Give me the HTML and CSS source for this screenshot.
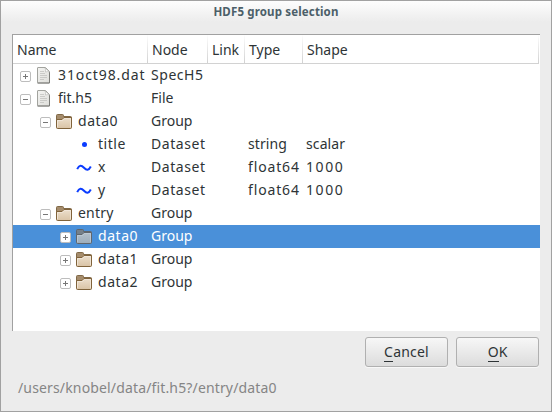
FILE: index.html
```html
<!DOCTYPE html>
<html lang="en">
<head>
<meta charset="utf-8">
<title>HDF5 group selection</title>
<link rel="stylesheet" href="styles.css">
</head>
<body>
<svg class="defs" width="0" height="0">
  <defs>
    <linearGradient id="tan" x1="0" y1="0" x2="0" y2="1"><stop offset="0" stop-color="#ecdfcd"/><stop offset="1" stop-color="#d9c3a5"/></linearGradient>
    <linearGradient id="steel" x1="0" y1="0" x2="0" y2="1"><stop offset="0" stop-color="#b4c0ca"/><stop offset="1" stop-color="#9dadba"/></linearGradient>
    <linearGradient id="paper" x1="0" y1="0" x2="1" y2="1"><stop offset="0" stop-color="#f4f4f2"/><stop offset="1" stop-color="#dededa"/></linearGradient>
    <symbol id="file" viewBox="0 0 16 17">
      <path d="M2 .5h7.500l4 4v11q0 .5-.5.5H2q-.5 0-.5-.5V1q0-.5.5-.5z" fill="url(#paper)" stroke="#a2a39e"/>
      <path d="M1.500 16h12V5" fill="none" stroke="#7c7d79"/>
      <path d="M9 1q1 1.500.5 4 2-.8 4 0z" fill="#fff" stroke="#b4b4b0" stroke-width=".6"/>
      <path d="M4 4.500h4M4 6.500h5M4 8.500h7M4 10.500h7M4 12.500h4" stroke="#c2c2bf" stroke-width=".8"/>
    </symbol>
    <symbol id="folder" viewBox="0 0 16 15">
      <path class="back" d="M.5 13V1.500q0-1 1-1h5q1 0 1 1v1h7q1 0 1 1V13z"/>
      <path class="front" d="M.5 5.500h5.500l2-2h7.500v10q0 1-1 1h-13q-1 0-1-1z"/>
      <path class="shine" d="M1.500 13V6.500h5l2-2h6V13"/>
    </symbol>
    <symbol id="wave" viewBox="0 0 16 8">
      <path d="M1.200 5.200C3.200.8 5.400 1.100 8 3.800S12.600 6.700 14.800 2.500" fill="none" stroke="#0b3cff" stroke-width="2"/>
    </symbol>
  </defs>
</svg>
<div class="window">
  <header class="titlebar">HDF5 group selection</header>
  <main class="tree">
    <div class="grid head">
      <span>Name</span><span>Node</span><span>Link</span><span>Type</span><span>Shape</span>
    </div>
    <div class="grid row">
      <div class="name"><i class="toggle plus"></i><svg class="file"><use href="#file"/></svg><span class="s9">31oct98.dat</span></div>
      <span class="s5">SpecH5</span>
    </div>
    <div class="grid row">
      <div class="name"><i class="toggle"></i><svg class="file"><use href="#file"/></svg><span>fit.h5</span></div>
      <span>File</span>
    </div>
    <div class="grid row">
      <div class="name l1"><i class="toggle"></i><svg class="folder"><use href="#folder"/></svg><span class="s5">data0</span></div>
      <span>Group</span>
    </div>
    <div class="grid row">
      <div class="name leaf"><i class="dot"></i><span class="s5">title</span></div>
      <span class="s5">Dataset</span><span></span><span class="s1">string</span><span class="s1">scalar</span>
    </div>
    <div class="grid row">
      <div class="name leaf"><svg class="wave"><use href="#wave"/></svg><span>x</span></div>
      <span class="s5">Dataset</span><span></span><span class="s8">float64</span><span class="s16">1000</span>
    </div>
    <div class="grid row">
      <div class="name leaf"><svg class="wave"><use href="#wave"/></svg><span>y</span></div>
      <span class="s5">Dataset</span><span></span><span class="s8">float64</span><span class="s16">1000</span>
    </div>
    <div class="grid row">
      <div class="name l1"><i class="toggle"></i><svg class="folder"><use href="#folder"/></svg><span class="s2">entry</span></div>
      <span>Group</span>
    </div>
    <div class="grid row selected">
      <div class="name l2"><i class="toggle plus"></i><svg class="folder"><use href="#folder"/></svg><span class="s5">data0</span></div>
      <span>Group</span>
    </div>
    <div class="grid row">
      <div class="name l2"><i class="toggle plus"></i><svg class="folder"><use href="#folder"/></svg><span class="s5">data1</span></div>
      <span>Group</span>
    </div>
    <div class="grid row">
      <div class="name l2"><i class="toggle plus"></i><svg class="folder"><use href="#folder"/></svg><span class="s5">data2</span></div>
      <span>Group</span>
    </div>
  </main>
  <div class="actions">
    <button class="s2"><span class="key">C</span>ancel</button>
    <button><span class="key">O</span>K</button>
  </div>
  <footer class="path">/users/knobel/data/fit.h5?/entry/data0</footer>
</div>
</body>
</html>
```

FILE: styles.css
```css
* { box-sizing: border-box; }
body { margin: 0; font: 14px/22px "Noto Sans", sans-serif; color: #2e3436; }
.defs { display: block; }
.window {
  width: 552px; height: 412px; padding: 0 11px; overflow: hidden;
  border: 1px solid #a1a1a1;
  background: linear-gradient(#fdfdfd, #ececec 21px, #ececec);
}
.titlebar { height: 33px; text-align: center; font-size: 11.5px; font-weight: 700; letter-spacing: .15px; color: #4c5f69; }
.tree {
  width: 528px; height: 297px; background: #fff;
  border-top: 1px solid #a1a1a1; border-left: 1px solid #a1a1a1;
}
.grid { display: grid; grid-template-columns: 135px 60px 37px 58px 236px; white-space: nowrap; }
.head { width: 526px; height: 29px; border-bottom: 1px solid #d2d2d2; }
.head span {
  padding: 4px 0 0 4px; border-right: 1px solid;
  border-image: linear-gradient(#fff, #d0d0d0) 1;
}
.row { height: 23px; }
.row > span { padding-left: 3px; }
.row > span:nth-child(5) { padding-left: 3px; }
.name { display: flex; align-items: center; padding-left: 7px; height: 23px; }
.name.l1 { padding-left: 27px; }
.name.l2 { padding-left: 47px; }
.name.leaf { padding-left: 63px; }
.name > span { height: 23px; }
.toggle {
  width: 11px; height: 11px; margin: 2px 5px 0 0; flex: none;
  border: 1px solid #bdbdbd; border-radius: 2px;
  background: linear-gradient(#777, #777) center / 5px 1px no-repeat, #fff;
}
.toggle.plus {
  background: linear-gradient(#777, #777) center / 5px 1px no-repeat,
    linear-gradient(#777, #777) center / 1px 5px no-repeat, #fff;
}
.file { width: 16px; height: 17px; margin: 0 6px 1px 0; flex: none; }
.folder { width: 16px; height: 15px; margin-right: 6px; flex: none; }
.back { fill: var(--back, #a58c6c); stroke: var(--edge, #806846); }
.front { fill: var(--front, url(#tan)); stroke: var(--edge, #80633b); }
.shine { fill: none; stroke: var(--shine, #f3e9dc); stroke-opacity: .8; }
.selected {
  --back: #75808a; --edge: #60666c; --front: url(#steel); --shine: #becbd6;
  width: 527px; background: #4a90d9; color: #fff;
}
.dot { width: 5px; height: 5px; margin: 0 11px 1px 6px; border-radius: 50%; background: #0b3cff; }
.wave { width: 16px; height: 8px; margin-right: 6px; flex: none; }
.s1 { letter-spacing: .1px; }
.s2 { letter-spacing: .2px; }
.s5 { letter-spacing: .55px; }
.s8 { letter-spacing: .85px; }
.s9 { letter-spacing: .9px; }
.s16 { letter-spacing: 1.6px; }
.actions { display: flex; justify-content: flex-end; gap: 8px; padding: 6px 1px 0 0; }
button {
  width: 83px; height: 30px; padding: 0; font: inherit; color: inherit;
  border: 1px solid #b0b0b0; border-radius: 3px;
  background: linear-gradient(#f7f7f7, #dcdcdc); box-shadow: 0 1px #f8f8f8;
}
button.s2 { letter-spacing: .2px; }
.key { display: inline-block; height: 20px; line-height: 20px; border-bottom: 1px solid #2e3436; }
.path { margin-top: 10px; padding: 0 0 0 6px; color: #858585; letter-spacing: .15px; }
```
